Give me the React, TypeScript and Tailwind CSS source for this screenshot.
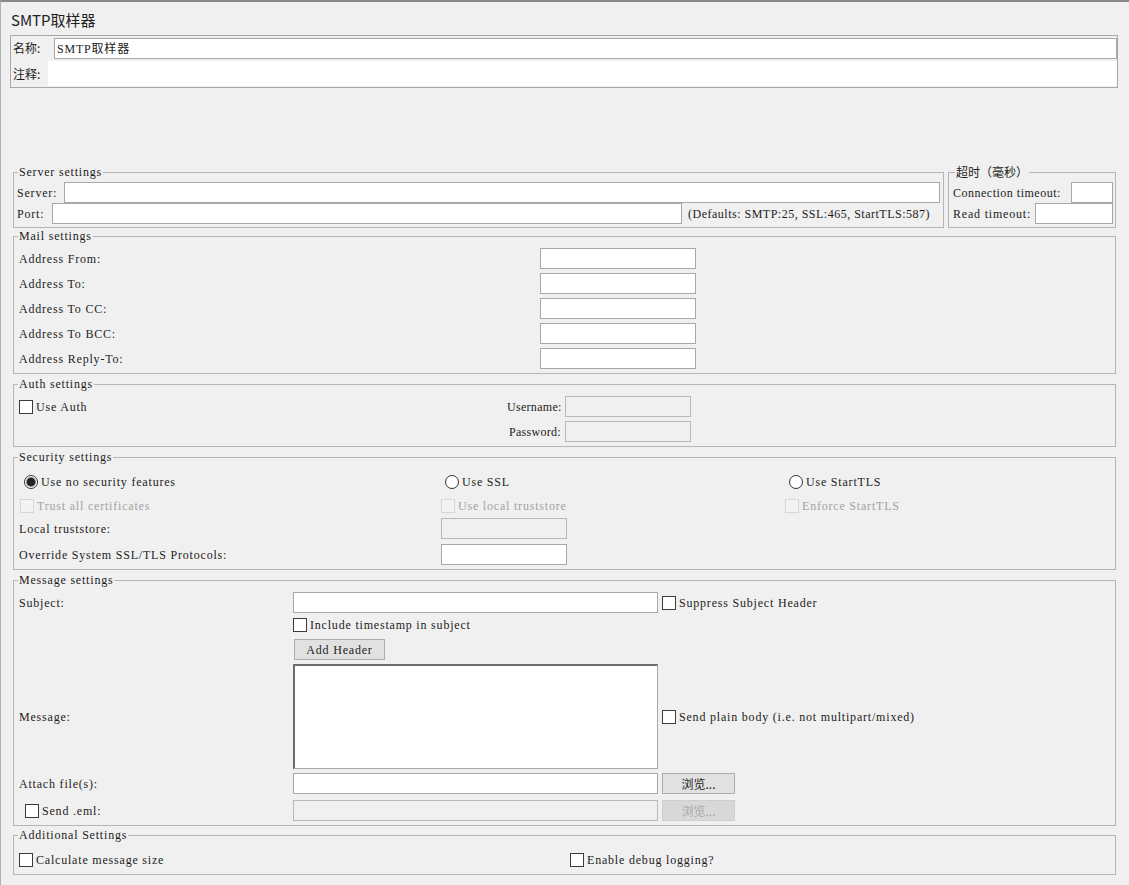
import type { ReactNode } from 'react';

const field = 'h-[21px] border border-[#a8a8a8] bg-white outline-none px-[2px]';
const fieldOff = 'h-[21px] border border-[#b8b8b8] bg-[#f0f0f0]';
const cjk = "font-[family-name:'Noto_Sans_CJK_SC',sans-serif] tracking-normal";
const ascii = "font-[family-name:'Liberation_Serif','Noto_Sans_CJK_SC',serif] text-[12px] tracking-[0.8px]";

function Box({ off, label, cls = '' }: { off?: boolean; label: string; cls?: string }) {
  return (
    <label className={`flex items-center gap-[3px] ${cls} ${off ? 'text-[#a3a3a3]' : ''}`}>
      <span
        className={`block h-[14px] w-[14px] border ${off ? 'border-[#d6d6d6] bg-[#f3f3f3]' : 'border-[#3c3c3c] bg-white'}`}
      />
      <span className="whitespace-nowrap">{label}</span>
    </label>
  );
}

function Radio({ on, label }: { on?: boolean; label: string }) {
  return (
    <label className="flex items-center gap-[3px]">
      <span className="flex h-[14px] w-[14px] items-center justify-center rounded-full border border-[#333] bg-white">
        {on && <span className="block h-[8px] w-[8px] rounded-full bg-[#222] ring-1 ring-[#888]" />}
      </span>
      <span className="whitespace-nowrap">{label}</span>
    </label>
  );
}

function Group({
  title,
  zh,
  legend = '-ml-[1px]',
  className = '',
  children,
}: {
  title: string;
  zh?: boolean;
  legend?: string;
  className?: string;
  children: ReactNode;
}) {
  return (
    <fieldset className={`min-w-0 border border-[#b6b6b6] ${className}`}>
      <legend className={`${legend} px-[1px] leading-[14px] ${zh ? `${cjk} text-[12px]` : ''}`}>{title}</legend>
      {children}
    </fieldset>
  );
}

function Browse({ off }: { off?: boolean }) {
  return (
    <button
      type="button"
      className={`h-[21px] w-[73px] border ${cjk} text-[12px] leading-[14px] ${
        off ? 'border-[#cfcfcf] bg-[#d8d8d8] text-[#a8a8a8]' : 'border-[#adadad] bg-[#e1e1e1] text-[#222]'
      }`}
    >
      浏览...
    </button>
  );
}

export default function App() {
  const addresses = ['Address From:', 'Address To:', 'Address To CC:', 'Address To BCC:', 'Address Reply-To:'];

  return (
    <div className={`h-[885px] w-[1129px] overflow-hidden border-t-2 border-l border-[#8a8a8a] border-l-[#b0b0b0] bg-[#f0f0f0] ${ascii} leading-[14px] text-[#1c1c1c]`}>
      <h1 className={`ml-[10px] mt-[7px] ${cjk} text-[15px] leading-[22px] text-[#222]`}>SMTP取样器</h1>

      <div className={`ml-[9px] mt-[4px] w-[1108px] border border-[#a8a8a8] ${cjk} text-[12px]`}>
        <div className="flex h-[24px] items-center">
          <span className="w-[43px] pl-[2px]">名称:</span>
          <input readOnly defaultValue="SMTP取样器" className={`${field} flex-1 ${ascii}`} />
        </div>
        <div className="flex h-[27px] items-center">
          <span className="w-[37px] pl-[2px]">注释:</span>
          <div className="h-[25px] flex-1 bg-white" />
        </div>
      </div>

      <div className="ml-[12px] mt-[77px] flex w-[1103px] gap-[4px]">
        <Group title="Server settings" legend="ml-[1px]" className="w-[931px] shrink-0 px-[3px] pb-[3px] pt-[3px]">
          <div className="flex items-center">
            <span className="w-[47px]">Server:</span>
            <input readOnly className={`${field} flex-1`} />
          </div>
          <div className="flex items-center">
            <span className="w-[35px]">Port:</span>
            <input readOnly className={`${field} h-[20px] w-[630px]`} />
            <span className="ml-[6px] whitespace-nowrap tracking-[0.5px]">(Defaults: SMTP:25, SSL:465, StartTLS:587)</span>
          </div>
        </Group>
        <Group title="超时（毫秒）" zh legend="ml-[2px]" className="w-[168px] shrink-0 pb-[3px] pl-[4px] pr-[2px] pt-[3px]">
          <div className="flex items-center">
            <span className="flex-1 whitespace-nowrap tracking-[0.5px]">Connection timeout:</span>
            <input readOnly className={`${field} w-[42px]`} />
          </div>
          <div className="flex items-center">
            <span className="flex-1">Read timeout:</span>
            <input readOnly className={`${field} h-[20px] w-[78px]`} />
          </div>
        </Group>
      </div>

      <div className="ml-[12px] flex w-[1103px] flex-col">
        <Group title="Mail settings" className="mt-[1px] pb-[4px] pl-[5px] pt-[5px]">
          <div className="flex flex-col gap-[4px]">
            {addresses.map((a) => (
              <div key={a} className="flex items-center">
                <span className="w-[521px]">{a}</span>
                <input readOnly className={`${field} w-[156px]`} />
              </div>
            ))}
          </div>
        </Group>

        <Group title="Auth settings" className="mt-[3px] pb-[4px] pl-[5px] pt-[5px]">
          <div className="flex h-[21px] items-center">
            <div className="w-[488px]">
              <Box label="Use Auth" />
            </div>
            <span className="w-[54px] whitespace-nowrap text-right tracking-[0.3px]">Username:</span>
            <div className={`${fieldOff} ml-[4px] w-[126px]`} />
          </div>
          <div className="mt-[4px] flex h-[21px] items-center">
            <div className="w-[488px]" />
            <span className="w-[54px] whitespace-nowrap text-right tracking-[0.3px]">Password:</span>
            <div className={`${fieldOff} ml-[4px] w-[126px]`} />
          </div>
        </Group>

        <Group title="Security settings" className="mt-[3px] pb-[4px] pl-[5px] pt-[6px]">
          <div className="grid grid-cols-[422px_344px_1fr]">
            <div className="flex h-[24px] items-center pl-[5px]">
              <Radio on label="Use no security features" />
            </div>
            <div className="flex h-[24px] items-center pl-[4px]">
              <Radio label="Use SSL" />
            </div>
            <div className="flex h-[24px] items-center pl-[4px]">
              <Radio label="Use StartTLS" />
            </div>
            <div className="flex h-[24px] items-center pl-[1px]">
              <Box off label="Trust all certificates" />
            </div>
            <div className="flex h-[24px] items-center">
              <Box off label="Use local truststore" />
            </div>
            <div className="flex h-[24px] items-center">
              <Box off label="Enforce StartTLS" />
            </div>
            <div className="flex h-[21px] items-center">Local truststore:</div>
            <div className={`${fieldOff} w-[126px]`} />
            <div />
            <div className="mt-[5px] flex h-[21px] items-center">Override System SSL/TLS Protocols:</div>
            <input readOnly className={`${field} mt-[5px] w-[126px]`} />
            <div />
          </div>
        </Group>

        <Group title="Message settings" className="mt-[3px] pb-[4px] pl-[5px] pt-[5px]">
          <div className="grid grid-cols-[274px_365px_1fr] items-center">
            <span>Subject:</span>
            <input readOnly className={`${field} w-[365px]`} />
            <div className="pl-[4px]">
              <Box label="Suppress Subject Header" />
            </div>

            <div />
            <div className="mt-[5px] h-[19px]">
              <Box label="Include timestamp in subject" />
            </div>
            <div />

            <div />
            <div className="mt-[2px]">
              <button
                type="button"
                className="ml-[1px] h-[21px] w-[91px] border border-[#adadad] bg-[#e1e1e1] text-[#222]"
              >
                Add Header
              </button>
            </div>
            <div />

            <span className="mt-[4px]">Message:</span>
            <textarea
              readOnly
              className="mt-[4px] h-[105px] w-[365px] resize-none border border-[#a8a8a8] border-l-2 border-t-2 border-l-[#6c6c6c] border-t-[#6c6c6c] bg-white outline-none"
            />
            <div className="mt-[4px] pl-[4px]">
              <Box label="Send plain body (i.e. not multipart/mixed)" />
            </div>

            <span className="mt-[4px]">Attach file(s):</span>
            <input readOnly className={`${field} mt-[4px] w-[365px]`} />
            <div className="mt-[4px] pl-[4px]">
              <Browse />
            </div>

            <div className="mt-[6px] pl-[6px]">
              <Box label="Send .eml:" />
            </div>
            <div className={`${fieldOff} mt-[6px] w-[365px]`} />
            <div className="mt-[6px] pl-[4px]">
              <Browse off />
            </div>
          </div>
        </Group>

        <Group title="Additional Settings" className="mt-[2px] pb-[7px] pl-[5px] pt-[11px]">
          <div className="flex items-center">
            <div className="w-[551px]">
              <Box label="Calculate message size" />
            </div>
            <Box label="Enable debug logging?" />
          </div>
        </Group>
      </div>
    </div>
  );
}
